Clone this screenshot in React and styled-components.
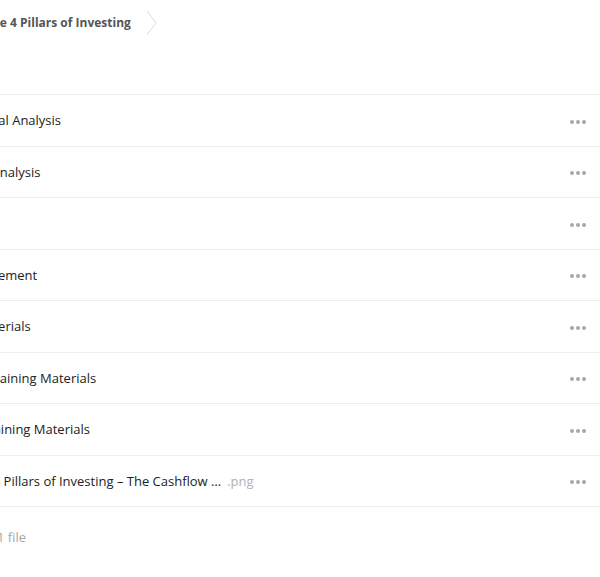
import React from "react";
import styled, { createGlobalStyle } from "styled-components";

const folders = [
	{ id: 1, name: "Capital Analysis" },
	{ id: 2, name: "Tax Analysis" },
	{ id: 3, name: "ETFs" },
	{ id: 4, name: "Refinement" },
	{ id: 5, name: "- Materials" },
	{ id: 6, name: "EN Training Materials" },
	{ id: 7, name: "IT Training Materials" },
	{ id: 8, name: "The 4 Pillars of Investing – The Cashflow …", ext: ".png" },
];

function App() {
	return (
		<>
			<GlobalStyle />
			<Page>
				<Breadcrumbs>
					<Crumb>The 4 Pillars of Investing</Crumb>
					<Chevron viewBox="0 0 12 26" aria-hidden="true">
						<path d="M1 1 L10 13 L1 25" />
					</Chevron>
				</Breadcrumbs>
				<HeaderSpace />
				<FileList>
					{folders.map((f) => (
						<Row key={f.id}>
							<Name>
								{f.name}
								{f.ext && <Ext>{f.ext}</Ext>}
							</Name>
							<Actions aria-label="Actions">
								<Dot />
								<Dot />
								<Dot />
							</Actions>
						</Row>
					))}
				</FileList>
				<Summary>7 folders and 1 file</Summary>
			</Page>
		</>
	);
}

//STYLES

const GlobalStyle = createGlobalStyle`
	html, body {
		margin: 0;
		background: #ffffff;
		overflow: hidden;
	}
	body {
		font-family: "Open Sans", "Noto Sans", sans-serif;
		color: #222222;
	}
`;

const Page = styled.div`
	margin-left: -33px;
	width: calc(100% + 33px);
`;

const Breadcrumbs = styled.div`
	height: 44px;
	display: flex;
	align-items: center;
	padding-left: 18px;
`;

const Crumb = styled.span`
	font-size: 12px;
	font-weight: 700;
	color: #555555;
`;

const Chevron = styled.svg`
	width: 12px;
	height: 26px;
	margin-left: 15px;
	margin-top: 1px;
	fill: none;
	stroke: #dddddd;
	stroke-width: 1;
`;

const HeaderSpace = styled.div`
	height: 50px;
`;

const FileList = styled.div`
	border-top: 1px solid #ededed;
`;

const Row = styled.div`
	box-sizing: border-box;
	height: 51.5px;
	display: flex;
	align-items: center;
	justify-content: space-between;
	border-bottom: 1px solid #ededed;
	padding-right: 14px;
`;

const Name = styled.span`
	font-size: 13px;
	color: #222222;
	white-space: nowrap;
`;

const Ext = styled.span`
	color: #b0b0b0;
	margin-left: 6px;
`;

const Actions = styled.div`
	display: flex;
	gap: 2px;
	padding-top: 3px;
`;

const Dot = styled.span`
	width: 4px;
	height: 4px;
	border-radius: 50%;
	background: #a8a8a8;
`;

const Summary = styled.div`
	padding-top: 21px;
	margin-left: -53px;
	font-size: 13px;
	color: #a8a8a8;
`;

export default App;
